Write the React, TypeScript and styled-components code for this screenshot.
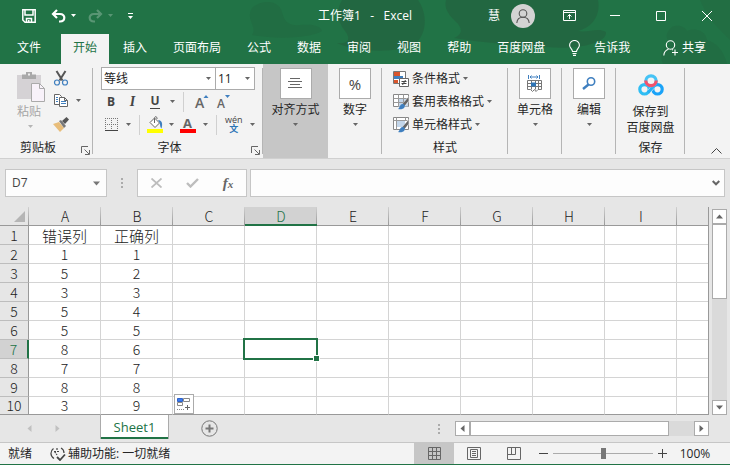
import React from "react";
import styled, { createGlobalStyle, css } from "styled-components";

const green = "#217346";
const ui = '"Open Sans", "Noto Sans CJK SC", sans-serif';
const sheetFont = '"Noto Sans CJK SC", sans-serif';

const Global = createGlobalStyle`
  *, *::before, *::after { box-sizing: border-box; }
  body { margin: 0; background: #e6e6e6; color: #262626; font: 12px/16px ${ui}; }
  button, input, select { font: inherit; color: inherit; margin: 0; padding: 0; border: 0; background: none; border-radius: 0; outline: 0; }
  svg { display: block; flex: none; }
`;

const Page = styled.div`
  display: flex;
  flex-direction: column;
  min-height: 100vh;
`;

/* ---------- header ---------- */
const Header = styled.header`
  position: relative;
  background: ${green};
  color: #fff;
  overflow: hidden;
`;
const Backdrop = styled.svg`
  position: absolute;
  top: 0;
  right: 0;
`;
const TitleBar = styled.div`
  position: relative;
  display: grid;
  grid-template-columns: 1fr auto 1fr;
  align-items: center;
  height: 34px;
  padding-bottom: 3px;
`;
const QuickAccess = styled.div`
  display: flex;
  align-items: center;
  padding-left: 22px;
`;
const QuickButton = styled.button<{ $gap?: number; $dim?: boolean }>`
  display: flex;
  margin-right: ${(p) => p.$gap ?? 0}px;
  opacity: ${(p) => (p.$dim ? 0.25 : 1)};
`;
const Title = styled.h1`
  margin: 0;
  font-size: 12px;
  font-weight: 400;
  white-space: pre;
`;
const WindowTools = styled.div`
  display: flex;
  align-items: center;
  justify-content: flex-end;
`;
const Avatar = styled.button`
  display: flex;
  justify-content: center;
  align-items: center;
  width: 24px;
  height: 24px;
  margin: 0 11px;
  border-radius: 50%;
  background: #d3d3d3;
`;
const WindowButton = styled.button`
  display: flex;
  justify-content: center;
  align-items: center;
  width: 46px;
  height: 30px;
`;
const TabBar = styled.nav`
  position: relative;
  display: flex;
  gap: 2px;
  height: 30px;
  padding: 0 11px 0 5px;
`;
const Tab = styled.button<{ $active?: boolean; $end?: number }>`
  display: flex;
  align-items: center;
  padding: 0 12px 3px;
  margin-right: ${(p) => p.$end ?? 0}px;
  background: ${(p) => (p.$active ? "#f3f3f3" : "transparent")};
  color: ${(p) => (p.$active ? green : "#fff")};
`;
const TabAction = styled(Tab)<{ $gap: number }>`
  gap: ${(p) => p.$gap}px;
  padding-right: 0;
  padding-left: 10px;
`;
const Spacer = styled.div`
  flex: 1;
`;

/* ---------- ribbon ---------- */
const Ribbon = styled.section`
  display: flex;
  height: 95px;
  background: #f3f3f3;
  border-bottom: 1px solid #d0d0d0;
`;
const Group = styled.div<{ $w: number; $line?: boolean }>`
  position: relative;
  display: flex;
  flex-direction: column;
  flex: none;
  width: ${(p) => p.$w}px;
  padding-top: 3px;
  ${(p) =>
    p.$line !== false &&
    css`
      &::after {
        content: "";
        position: absolute;
        right: 0;
        top: 4px;
        bottom: 4px;
        width: 1px;
        background: #b5b5b5;
      }
    `}
`;
const GroupLabel = styled.div<{ $launcher?: boolean }>`
  display: flex;
  justify-content: center;
  align-items: center;
  height: 18px;
  margin-top: auto;
  margin-bottom: 1px;
  padding-right: ${(p) => (p.$launcher ? 17 : 0)}px;
`;
const Launcher = styled.button`
  position: absolute;
  right: 3px;
  bottom: 3px;
`;
const ClipBody = styled.div`
  display: flex;
  padding: 4px 0 0 17px;
  gap: 8px;
`;
const PasteButton = styled.button`
  display: flex;
  flex-direction: column;
  align-items: flex-start;
  width: 28px;
  color: #a6a6a6;
`;
const PasteLabel = styled.span`
  padding-top: 1px;
`;
const PasteArrow = styled.span`
  padding: 5px 0 0 11px;
`;
const ClipTools = styled.div`
  display: flex;
  flex-direction: column;
  margin-top: -5px;
`;
const ToolButton = styled.button<{ $w?: number }>`
  display: flex;
  align-items: center;
  justify-content: ${(p) => (p.$w ? "center" : "flex-start")};
  gap: 7px;
  height: 23px;
  width: ${(p) => (p.$w ? p.$w + "px" : "auto")};
`;
const FontBody = styled.div`
  display: flex;
  flex-direction: column;
  padding: 0 8px;
`;
const ComboRow = styled.div`
  display: flex;
`;
const Combo = styled.label<{ $grow?: boolean }>`
  display: flex;
  align-items: center;
  height: 23px;
  flex: ${(p) => (p.$grow ? "1" : "0 0 40px")};
  border: 1px solid #ababab;
  margin-left: ${(p) => (p.$grow ? 0 : -1)}px;
  padding: 0 4px 0 2px;
  background: #fff;
  select {
    appearance: none;
    flex: 1;
    min-width: 0;
    color: #222;
  }
`;
const ToolRow = styled.div`
  display: flex;
  align-items: center;
  height: 23px;
`;
const VLine = styled.span`
  width: 1px;
  height: 20px;
  margin: 0 5px;
  background: #d0d0d0;
`;
const Letter = styled.span<{ $kind: "b" | "i" | "u" }>`
  color: #444;
  line-height: 14px;
  font-weight: 700;
  font-style: ${(p) => (p.$kind === "i" ? "italic" : "normal")};
  font-family: ${(p) => (p.$kind === "i" ? '"Liberation Serif", serif' : ui)};
  font-size: ${(p) => (p.$kind === "i" ? 14 : 12)}px;
  border-bottom: ${(p) => (p.$kind === "u" ? "1px solid #444" : "0")};
`;
const Pinyin = styled.span`
  display: flex;
  flex-direction: column;
  align-items: center;
  margin-left: 3px;
  font-size: 9px;
  line-height: 9px;
  color: #444;
  b {
    font-size: 9px;
    line-height: 10px;
    color: #2e75b6;
  }
`;
const BigButton = styled.button<{ $pressed?: boolean }>`
  display: flex;
  flex-direction: column;
  align-items: center;
  height: 94px;
  width: 100%;
  padding-top: 4px;
  background: ${(p) => (p.$pressed ? "#c6c6c6" : "transparent")};
`;
const PlainGroup = styled(Group)`
  padding-top: 0;
`;
const IconBox = styled.span`
  display: flex;
  align-items: center;
  justify-content: center;
  width: 32px;
  height: 31px;
  margin-bottom: 3px;
  border: 1px solid #ababab;
  background: #fff;
  font-size: 15px;
  color: #444;
`;
const ArrowSlot = styled.span`
  padding-top: 5px;
`;
const StyleList = styled.div`
  display: flex;
  flex-direction: column;
  padding-left: 11px;
`;
const StyleButton = styled.button`
  display: flex;
  align-items: center;
  gap: 3px;
  height: 23px;
  white-space: nowrap;
`;
const SaveButton = styled.button`
  display: flex;
  flex-direction: column;
  align-items: center;
  padding-top: 7px;
  svg {
    margin-bottom: 8px;
  }
`;
const Collapse = styled.button`
  align-self: flex-end;
  margin: 0 8px 4px auto;
`;

/* ---------- formula bar ---------- */
const FormulaBar = styled.div`
  display: flex;
  height: 48px;
  padding: 10px 5px;
`;
const Field = styled.div<{ $w?: number }>`
  display: flex;
  align-items: center;
  flex: ${(p) => (p.$w ? `0 0 ${p.$w}px` : "1")};
  min-width: 0;
  height: 28px;
  border: 1px solid #c6c6c6;
  background: #fdfdfd;
  input {
    flex: 1;
    min-width: 0;
    padding-left: 6px;
    color: #444;
  }
`;
const FieldButton = styled.button<{ $w: number }>`
  display: flex;
  justify-content: center;
  width: ${(p) => p.$w}px;
`;
const FxLabel = styled.span`
  font: italic 700 15px/18px "Liberation Serif", serif;
  color: #666;
  small {
    font-size: 11px;
  }
`;
const Dots = styled.span<{ $l: number; $r: number }>`
  display: flex;
  align-items: center;
  margin: 0 ${(p) => p.$r}px 0 ${(p) => p.$l}px;
`;

/* ---------- grid ---------- */
const SheetArea = styled.div`
  display: flex;
  align-items: flex-end;
  padding-right: 3px;
`;
const Grid = styled.table`
  flex: 1;
  width: 0;
  table-layout: fixed;
  border-collapse: separate;
  border-spacing: 0;
  font: 14px/17px ${sheetFont};
  color: #222;
  border-right: 1px solid #999;
`;
const HeadCol = styled.col`
  width: 29px;
`;
const DataCol = styled.col`
  width: 72px;
`;
const ColHead = styled.th<{ $on?: boolean; $last?: boolean }>`
  height: 19px;
  padding: 2px 0 0;
  vertical-align: top;
  font-weight: 300;
  line-height: 15px;
  color: ${(p) => (p.$on ? green : "#222")};
  border-bottom: ${(p) => (p.$on ? `2px solid ${green}` : "1px solid #999")};
  background: ${(p) =>
      p.$last ? "none" : "linear-gradient(#d0d0d0, #999) right / 1px 100% no-repeat"},
    ${(p) => (p.$on ? "#d2d2d2" : "#e6e6e6")};
`;
const Corner = styled(ColHead)`
  svg {
    margin: 2px 4px 0 auto;
  }
`;
const RowHead = styled.th<{ $on?: boolean; $last?: boolean }>`
  height: ${(p) => (p.$last ? 18 : 19)}px;
  padding: 0;
  font-weight: 300;
  color: ${(p) => (p.$on ? green : "#222")};
  background: ${(p) => (p.$on ? "#d2d2d2" : "#e6e6e6")};
  border-bottom: 1px solid ${(p) => (p.$last ? "#999" : "#bdbdbd")};
  border-right: ${(p) => (p.$on ? `2px solid ${green}` : "1px solid #999")};
`;
const Cell = styled.td<{ $last?: boolean; $end?: boolean; $title?: boolean }>`
  position: relative;
  padding: 0;
  font-size: ${(p) => (p.$title ? 15 : 14)}px;
  font-weight: 300;
  text-align: center;
  background: #fff;
  border-bottom: 1px solid ${(p) => (p.$last ? "#999" : "#d4d4d4")};
  border-right: ${(p) => (p.$end ? "0" : "1px solid #d4d4d4")};
`;
const Selection = styled.div`
  position: absolute;
  z-index: 1;
  inset: -2px;
  border: 2px solid ${green};
  &::after {
    content: "";
    position: absolute;
    right: -4px;
    bottom: -4px;
    width: 7px;
    height: 7px;
    border: 1px solid #fff;
    background: ${green};
  }
`;
const FillOptions = styled.button`
  position: absolute;
  z-index: 1;
  left: 1px;
  bottom: 0;
  display: flex;
  align-items: center;
  justify-content: center;
  width: 20px;
  height: 20px;
  border: 1px solid #ababab;
  background: #fff;
`;
const VScroll = styled.div`
  display: flex;
  flex-direction: column;
  align-self: stretch;
  width: 15px;
  margin: 2px 0 0 3px;
  background: #dadada;
`;
const ScrollButton = styled.button`
  display: flex;
  flex: none;
  align-items: center;
  justify-content: center;
  width: 15px;
  height: 15px;
  border: 1px solid #ababab;
  background: #fff;
`;
const VThumb = styled.div`
  height: 75px;
  margin-bottom: auto;
  border: 1px solid #ababab;
  background: #fff;
`;

/* ---------- sheet tabs and status ---------- */
const SheetBar = styled.div`
  display: flex;
  align-items: center;
  height: 27px;
  padding-right: 21px;
`;
const SheetNav = styled.div`
  display: flex;
  gap: 21px;
  width: 100px;
  padding-left: 26px;
`;
const SheetTab = styled.button`
  align-self: flex-start;
  width: 69px;
  height: 25px;
  margin-top: -1px;
  border: solid #ababab;
  border-width: 0 1px;
  box-shadow: inset 0 -2px ${green};
  background: #fff;
  color: ${green};
  font-size: 13px;
`;
const AddSheet = styled.button`
  margin-left: 32px;
`;
const HScroll = styled.div`
  display: flex;
  width: 254px;
  height: 15px;
  background: #dadada;
`;
const HThumb = styled.div`
  flex: 0 0 199px;
  margin-right: auto;
  border: 1px solid #ababab;
  background: #fff;
`;
const StatusBar = styled.footer`
  display: flex;
  align-items: center;
  height: 23px;
  margin-top: auto;
  padding: 0 19px 0 8px;
  background: #f3f3f3;
  border-top: 1px solid #c6c6c6;
  border-bottom: 1px solid ${green};
`;
const Access = styled.button`
  display: flex;
  align-items: center;
  gap: 2px;
  margin-left: 18px;
`;
const ViewButton = styled.button<{ $on?: boolean }>`
  display: flex;
  align-items: center;
  justify-content: center;
  width: 40px;
  height: 21px;
  background: ${(p) => (p.$on ? "#c6c6c6" : "transparent")};
`;
const ZoomGroup = styled.div`
  display: flex;
  align-items: center;
  gap: 5px;
  margin-left: 5px;
`;
const ZoomButton = styled.button`
  display: flex;
  width: 9px;
`;
const ZoomSlider = styled.input`
  appearance: none;
  width: 100px;
  height: 13px;
  background: linear-gradient(#ababab, #ababab) center / 100% 1px no-repeat;
  &::-webkit-slider-thumb {
    appearance: none;
    width: 5px;
    height: 11px;
    background: #777;
  }
`;
const ZoomValue = styled.button`
  width: 32px;
  margin-left: 7px;
  white-space: nowrap;
`;

/* ---------- icons ---------- */
const Arrow = ({ c = "#666" }: { c?: string }) => (
  <svg width="5" height="3" viewBox="0 0 5 3" fill={c}><path d="M0 0h5L2.500 3z" /></svg>
);
const Triangle = ({ d, c = "#666" }: { d: "u" | "d" | "l" | "r"; c?: string }) => (
  <svg width="7" height="7" viewBox="0 0 7 7" fill={c}>
    <path d={{ u: "M0 5.500L3.500 1.500L7 5.500z", d: "M0 1.500h7L3.500 5.500z", l: "M5.500 0v7L1.500 3.500z", r: "M1.500 0v7L5.500 3.500z" }[d]} />
  </svg>
);
const DotsIcon = () => (
  <svg width="2" height="10" viewBox="0 0 2 10" fill="#ababab"><path d="M0 0h2v2H0zM0 4h2v2H0zM0 8h2v2H0z" /></svg>
);
const UndoIcon = () => (
  <svg width="15" height="14" viewBox="0 0 15 14" fill="none" stroke="#fff" strokeWidth="2.200">
    <path d="M6 1L2 5l4 4M2.500 5H9c6 0 5.500 7.500 0 7.500H8" />
  </svg>
);
const Person = ({ c, size }: { c: string; size: number }) => (
  <svg width={size} height={size} viewBox="0 0 14 14" fill="none" stroke={c} strokeWidth="1.100">
    <circle cx="7" cy="4.500" r="3.800" /><path d="M.8 14c.3-4 2.800-5.700 6.200-5.700s5.900 1.700 6.200 5.700" />
  </svg>
);
const LauncherIcon = () => (
  <svg width="9" height="9" viewBox="0 0 9 9" fill="none" stroke="#666"><path d="M.5 7V.5H7M3.500 3.500L8 8M8.500 4v4.500H4" /></svg>
);
const Brush = () => (
  <g>
    <path d="M15.500 2v6l-4.500 5-2-2z" fill="#fff" /><path d="M15.500 3v4l-4 5-2-2z" fill="#666" /><path d="M9.500 10c2 0 3 1.500 2 3.200-1 1.800-4 2.600-6.500 1.800 2-1 1.500-4.500 4.500-5z" fill="#3f7fbf" />
  </g>
);
const LetterA = ({ size, up }: { size: number; up: boolean }) => (
  <svg width="16" height="22" viewBox="0 0 16 22">
    <text x="2" y="17" fontSize={size} fontWeight="600" fill="#666" fontFamily="Open Sans">A</text>
    <path d={up ? "M10.500 7L13 4l2.500 3z" : "M10 4h5l-2.500 3z"} fill="#3f7fbf" />
  </svg>
);

const tabs = ["文件", "开始", "插入", "页面布局", "公式", "数据", "审阅", "视图", "帮助", "百度网盘"];
const letters = ["A", "B", "C", "D", "E", "F", "G", "H", "I"];
const rows = [["错误列", "正确列"], ["1", "1"], ["5", "2"], ["3", "3"], ["5", "4"], ["5", "5"], ["8", "6"], ["7", "7"], ["8", "8"], ["3", "9"]];

export default function App() {
  return (
    <Page>
      <Global />
      <Header>
        <Backdrop width="730" height="64" viewBox="0 0 730 64" fill="#24633f" aria-hidden="true">
          <path d="M252 8c10-9 27-8 30 4 2 9 6 14 18 13 11-1 20 0 22 6-14 8-48 8-70 4 6-8-7-15 0-27z" opacity=".4" />
          <path d="M342 0h76c10 14 9 34-3 44-18 10-60 8-78-1 12 1 14-4 8-12-8-10-9-21-3-31z" opacity=".7" />
          <path d="M446 0h152c3 16-6 27-20 31 10 2 20-4 28 1 1 12-30 18-60 15-28-2-64-4-92-9 10-4 8-11 1-17-7-7-11-13-9-21z" opacity=".7" />
          <path d="M670 29c3-5 14-4 17 2 8-4 19 0 20 9 8 2 17 10 20 24h-64c-4-10-1-17 8-20-5-5-6-10-1-15z" opacity=".4" />
          <path d="M700 0h30v40c-10-10-22-20-30-40z" opacity=".3" />
        </Backdrop>
        <TitleBar>
          <QuickAccess>
            <QuickButton $gap={15} aria-label="保存">
              <svg width="14" height="14" viewBox="0 0 14 14" fill="none" stroke="#fff" strokeWidth="1.500"><path d="M.8.8h12.400v12.400H3L.8 11zM3 1v5h8V1M4.500 13V9.500h5V13" /><path d="M6 11h1.500v2.500H6z" fill="#fff" stroke="none" /></svg>
            </QuickButton>
            <QuickButton $gap={5} aria-label="撤消"><UndoIcon /></QuickButton>
            <QuickButton $gap={12} aria-label="撤消选项"><Arrow c="#fff" /></QuickButton>
            <QuickButton $gap={5} $dim aria-label="恢复">
              <svg width="15" height="14" viewBox="0 0 15 14" fill="none" stroke="#fff" strokeWidth="2.200"><path d="M9 1l4 4-4 4M12.500 5H6C0 5 .5 12.500 6 12.500h1" /></svg>
            </QuickButton>
            <QuickButton $gap={15} $dim aria-label="恢复选项"><Arrow c="#fff" /></QuickButton>
            <QuickButton aria-label="自定义快速访问工具栏">
              <svg width="5" height="6" viewBox="0 0 5 6" fill="#fff"><path d="M0 0h5v1H0zM0 3h5L2.500 6z" /></svg>
            </QuickButton>
          </QuickAccess>
          <Title>{"工作簿1   -   Excel"}</Title>
          <WindowTools>
            <span>慧</span>
            <Avatar aria-label="帐户"><Person c="#555" size={14} /></Avatar>
            <WindowButton aria-label="功能区显示选项">
              <svg width="13" height="11" viewBox="0 0 13 11" fill="none" stroke="#fff"><path d="M.5.5h12v10H.5zM.5 2.500h12M6.500 9V4.500M4.500 6.500l2-2 2 2" /></svg>
            </WindowButton>
            <WindowButton aria-label="最小化">
              <svg width="10" height="10" viewBox="0 0 10 10" stroke="#fff"><path d="M0 4.500h10" /></svg>
            </WindowButton>
            <WindowButton aria-label="最大化">
              <svg width="10" height="10" viewBox="0 0 10 10" fill="none" stroke="#fff"><path d="M.5.5h9v9h-9z" /></svg>
            </WindowButton>
            <WindowButton aria-label="关闭">
              <svg width="10" height="10" viewBox="0 0 10 10" stroke="#fff"><path d="M0 0l10 10M10 0L0 10" /></svg>
            </WindowButton>
          </WindowTools>
        </TitleBar>
        <TabBar>
          {tabs.map((t, i) => (
            <Tab key={t} $active={i === 1} $end={i === 0 ? 6 : 0}>{t}</Tab>
          ))}
          <TabAction $gap={14}>
            <svg width="11" height="16" viewBox="0 0 11 16" fill="none" stroke="#fff" strokeWidth="1.100"><path d="M3.500 11.500c0-2.500-2.900-3.400-2.900-6.300a4.900 4.700 0 019.800 0c0 2.900-2.900 3.800-2.900 6.300zM3.500 13.500h4M4 15.400h3" /></svg>
            告诉我
          </TabAction>
          <Spacer />
          <TabAction $gap={3} $end={13}>
            <svg width="16" height="16" viewBox="0 0 16 16" fill="none" stroke="#fff" strokeWidth="1.100"><circle cx="7.500" cy="5" r="4.200" /><path d="M.8 15.500c.2-3.500 2-5.500 4.700-6.300M9 9.500l1 .6M12 9.500v6M9 12.500h6" /></svg>
            共享
          </TabAction>
        </TabBar>
      </Header>

      <Ribbon>
        <Group $w={93}>
          <ClipBody>
            <PasteButton>
              <svg width="28" height="32" viewBox="0 0 28 32">
                <path d="M0 4h24v24H0z" fill="#d5d2d5" /><path d="M5 8V3.500h4V1h6v2.500h4V8z" fill="#a9a9a9" /><path d="M11 2.500h2v2h-2z" fill="#eee" />
                <path d="M14.500 12.500h8l5 5v13h-13z" fill="#f8f2fa" stroke="#aaa" /><path d="M22.500 12.500v5h5" fill="none" stroke="#aaa" />
              </svg>
              <PasteLabel>粘贴</PasteLabel>
              <PasteArrow><Arrow c="#b5b5b5" /></PasteArrow>
            </PasteButton>
            <ClipTools>
              <ToolButton aria-label="剪切">
                <svg width="16" height="16" viewBox="0 0 16 16" fill="none"><path d="M3.500 1l6 9.500M12.500 1l-6 9.500" stroke="#555" strokeWidth="2" /><circle cx="4" cy="12.500" r="2.500" stroke="#3f7fbf" strokeWidth="1.200" /><circle cx="12" cy="12.500" r="2.500" stroke="#3f7fbf" strokeWidth="1.200" /></svg>
              </ToolButton>
              <ToolButton aria-label="复制">
                <svg width="16" height="16" viewBox="0 0 16 16" fill="#fff" stroke="#666"><path d="M1.500 1.500h5l2 2v8h-7z" /><path d="M6.500 4.500h5l3 3v6h-8zM11.500 4.500v3h3" /><path d="M3 4.500h2M3 6.500h2M3 8.500h2M8 8.500h5M8 10.500h5" stroke="#3f7fbf" /></svg>
                <Arrow />
              </ToolButton>
              <ToolButton aria-label="格式刷">
                <svg width="16" height="16" viewBox="0 0 16 16"><path d="M0 8l6-2 5 6-4 4z" fill="#e8bd7a" /><path d="M6 5l2-1 5 6-2 2z" fill="#777" /><path d="M9 5l4.500-4L16 3.500 12 8z" fill="#555" /></svg>
              </ToolButton>
            </ClipTools>
          </ClipBody>
          <GroupLabel $launcher>剪贴板</GroupLabel>
          <Launcher aria-label="剪贴板选项"><LauncherIcon /></Launcher>
        </Group>

        <Group $w={170}>
          <FontBody>
            <ComboRow>
              <Combo $grow><select aria-label="字体"><option>等线</option></select><Arrow /></Combo>
              <Combo><select aria-label="字号"><option>11</option></select><Arrow /></Combo>
            </ComboRow>
            <ToolRow>
              <ToolButton $w={20} aria-label="加粗"><Letter $kind="b">B</Letter></ToolButton>
              <ToolButton $w={23} aria-label="倾斜"><Letter $kind="i">I</Letter></ToolButton>
              <ToolButton $w={22} aria-label="下划线"><Letter $kind="u">U</Letter></ToolButton>
              <ToolButton $w={12} aria-label="下划线选项"><Arrow /></ToolButton>
              <VLine />
              <ToolButton $w={24} aria-label="增大字号"><LetterA size={14} up /></ToolButton>
              <ToolButton $w={20} aria-label="减小字号"><LetterA size={12} up={false} /></ToolButton>
            </ToolRow>
            <ToolRow>
              <ToolButton $w={21} aria-label="边框">
                <svg width="13" height="14" viewBox="0 0 13 14" stroke="#777" fill="none"><path d="M0 .5h13M0 6.500h13M.5 0v12M6.500 0v12M12.500 0v12" strokeDasharray="1 1" /><path d="M0 12.500h13" stroke="#444" /></svg>
              </ToolButton>
              <ToolButton $w={12} aria-label="边框选项"><Arrow /></ToolButton>
              <VLine />
              <ToolButton $w={20} aria-label="填充颜色">
                <svg width="16" height="17" viewBox="0 0 16 17"><path d="M3 6.500L7.500 2l5 5L8 11.500z" fill="#fff" stroke="#666" /><path d="M7.500 7V2.500c0-3 3-2 2.500.5" fill="none" stroke="#666" /><path d="M11 4c4 0 5 4 3.500 8.500C12.500 11 14 8 11 4z" fill="#3f7fbf" /><path d="M0 13h16v4H0z" fill="#ff0" /></svg>
              </ToolButton>
              <ToolButton $w={12} aria-label="填充选项"><Arrow /></ToolButton>
              <ToolButton $w={22} aria-label="字体颜色">
                <svg width="16" height="23" viewBox="0 0 16 23"><text x="3" y="15" fontSize="13" fontWeight="700" fill="#666" fontFamily="Open Sans">A</text><path d="M0 16h16v4H0z" fill="red" /></svg>
              </ToolButton>
              <ToolButton $w={12} aria-label="颜色选项"><Arrow /></ToolButton>
              <VLine />
              <ToolButton aria-label="拼音"><Pinyin>wén<b>文</b></Pinyin><Arrow /></ToolButton>
            </ToolRow>
          </FontBody>
          <GroupLabel $launcher>字体</GroupLabel>
          <Launcher aria-label="字体设置"><LauncherIcon /></Launcher>
        </Group>

        <PlainGroup $w={65} $line={false}>
          <BigButton $pressed>
            <IconBox><svg width="15" height="11" viewBox="0 0 15 11" stroke="#666"><path d="M2 .5h10M0 3.500h14M2 6.500h10M0 9.500h14" /></svg></IconBox>
            对齐方式
            <ArrowSlot><Arrow /></ArrowSlot>
          </BigButton>
        </PlainGroup>
        <PlainGroup $w={54}>
          <BigButton><IconBox>%</IconBox>数字<ArrowSlot><Arrow /></ArrowSlot></BigButton>
        </PlainGroup>
        <Group $w={126}>
          <StyleList>
            <StyleButton>
              <svg width="16" height="16" viewBox="0 0 16 16"><path d="M.5.5h12v12H.5z" fill="#fff" stroke="#777" /><path d="M1 1h6v4H1z" fill="#d9552c" /><path d="M1 5h9v3H1z" fill="#3f7fbf" /><path d="M1 9h4v3H1z" fill="#d9552c" /><path d="M6.500 7.500h9v8h-9z" fill="#fff" stroke="#666" /><path d="M8.500 10.500h5M8.500 12.500h5M12.500 9l-3 5" stroke="#444" /></svg>
              条件格式<Arrow />
            </StyleButton>
            <StyleButton>
              <svg width="16" height="16" viewBox="0 0 16 16"><path d="M.5.5h15v12H.5z" fill="#fff" stroke="#888" /><path d="M5 4.500h10v8H5z" fill="#c3d6ea" /><path d="M.5 4.500h15M.5 8.500h15M5.500.5v12M10.500.5v12" stroke="#999" fill="none" /><Brush /></svg>
              套用表格格式<Arrow />
            </StyleButton>
            <StyleButton>
              <svg width="16" height="16" viewBox="0 0 16 16"><path d="M.5.5h15v12H.5z" fill="#fff" stroke="#888" /><path d="M4 4h8v6H4z" fill="#c3d6ea" /><path d="M.5 3.500h15M3.500.5v12M12.500.5v3" stroke="#999" fill="none" /><Brush /></svg>
              单元格样式<Arrow />
            </StyleButton>
          </StyleList>
          <GroupLabel>样式</GroupLabel>
        </Group>
        <PlainGroup $w={54}>
          <BigButton>
            <IconBox>
              <svg width="16" height="17" viewBox="0 0 16 17" fill="none" stroke="#777"><path d="M1.500 0v4M12.500 0v4M3 2h8M4.500.5L3 2l1.500 1.500M9.500.5L11 2 9.500 3.500" stroke="#3f7fbf" /><path d="M.5 5.500h14v9H11l-2 2-1.500-2-2 2-2-2h-3zM.5 8.500h14M.5 11.500h14M4.500 5.500v9M8.500 5.500v9M11.500 5.500v9" /><path d="M4 7.500h5v4H4z" fill="#2e75b6" stroke="none" /></svg>
            </IconBox>
            单元格<ArrowSlot><Arrow /></ArrowSlot>
          </BigButton>
        </PlainGroup>
        <PlainGroup $w={54}>
          <BigButton>
            <IconBox><svg width="14" height="13" viewBox="0 0 14 13" fill="none" stroke="#3f7fbf"><circle cx="9" cy="4.500" r="3.700" strokeWidth="1.600" /><path d="M6.500 7.500L1 12" strokeWidth="2.400" /></svg></IconBox>
            编辑<ArrowSlot><Arrow /></ArrowSlot>
          </BigButton>
        </PlainGroup>
        <Group $w={69}>
          <SaveButton>
            <svg width="26" height="22" viewBox="0 0 26 22" fill="none" strokeWidth="3.200">
              <circle cx="6.500" cy="15.300" r="4.700" stroke="#2fbdf3" />
              <circle cx="19.500" cy="15.300" r="4.700" stroke="#1aa3f8" />
              <path d="M11 17.500l4.500-5" stroke="#f3f3f3" strokeWidth="4" />
              <path d="M10 18.500l6-6.500" stroke="#25b0f6" />
              <circle cx="13" cy="7" r="5.200" stroke="#45c3f5" />
              <path d="M7.800 6.500a5.200 5.200 0 1010.400 0" stroke="#f4526b" />
            </svg>
            <span>保存到</span><span>百度网盘</span>
          </SaveButton>
          <GroupLabel>保存</GroupLabel>
        </Group>
        <Collapse aria-label="折叠功能区"><svg width="11" height="6" viewBox="0 0 11 6" fill="none" stroke="#444"><path d="M.5 5.500l5-5 5 5" /></svg></Collapse>
      </Ribbon>

      <FormulaBar>
        <Field $w={102}>
          <input aria-label="名称框" defaultValue="D7" />
          <FieldButton $w={20} aria-label="名称列表"><Triangle d="d" c="#777" /></FieldButton>
        </Field>
        <Dots $l={14} $r={14}><DotsIcon /></Dots>
        <Field $w={110}>
          <FieldButton $w={36} aria-label="取消"><svg width="11" height="10" viewBox="0 0 11 10" stroke="#bdbdbd" strokeWidth="1.800"><path d="M.5.5l10 9M10.500.5l-10 9" /></svg></FieldButton>
          <FieldButton $w={36} aria-label="输入"><svg width="13" height="10" viewBox="0 0 13 10" fill="none" stroke="#bdbdbd" strokeWidth="2.400"><path d="M1 5l3.500 3.500L12 1" /></svg></FieldButton>
          <FieldButton $w={36} aria-label="插入函数"><FxLabel>f<small>x</small></FxLabel></FieldButton>
        </Field>
        <Dots $l={3} $r={0} />
        <Field>
          <input aria-label="编辑栏" />
          <FieldButton $w={16} aria-label="展开编辑栏"><svg width="8" height="6" viewBox="0 0 8 6" fill="none" stroke="#666" strokeWidth="2"><path d="M.7 1L4 4.300 7.300 1" /></svg></FieldButton>
        </Field>
      </FormulaBar>

      <SheetArea>
        <Grid>
          <colgroup><HeadCol />{letters.map((l) => <DataCol key={l} />)}<col /></colgroup>
          <thead>
            <tr>
              <Corner aria-label="全选"><svg width="11" height="11" viewBox="0 0 11 11" fill="#b5b5b5"><path d="M11 0v11H0z" /></svg></Corner>
              {letters.map((l) => <ColHead key={l} $on={l === "D"}>{l}</ColHead>)}
              <ColHead $last />
            </tr>
          </thead>
          <tbody>
            {rows.map((r, i) => {
              const last = i === rows.length - 1;
              return (
                <tr key={i}>
                  <RowHead $on={i === 6} $last={last}>{i + 1}</RowHead>
                  {letters.map((l, j) => (
                    <Cell key={l} $last={last} $title={i === 0}>
                      {r[j]}
                      {i === 6 && l === "D" && <Selection />}
                      {last && l === "C" && (
                        <FillOptions aria-label="自动填充选项">
                          <svg width="14" height="14" viewBox="0 0 14 14" fill="none" stroke="#888"><path d="M6.500 1.500h6v3h-6zM.5 5.500h5v3h-5z" /><path d="M.5 1.500h5v3h-5z" fill="#3c7bf0" stroke="#2e62c8" /><path d="M0 12.500h7" strokeDasharray="1 1" /><path d="M8 10.500h5M10.500 8v5" stroke="#666" /></svg>
                        </FillOptions>
                      )}
                    </Cell>
                  ))}
                  <Cell $last={last} $end />
                </tr>
              );
            })}
          </tbody>
        </Grid>
        <VScroll>
          <ScrollButton aria-label="向上滚动"><Triangle d="u" /></ScrollButton>
          <VThumb />
          <ScrollButton aria-label="向下滚动"><Triangle d="d" /></ScrollButton>
        </VScroll>
      </SheetArea>

      <SheetBar>
        <SheetNav><Triangle d="l" c="#c0c0c0" /><Triangle d="r" c="#c0c0c0" /></SheetNav>
        <SheetTab>Sheet1</SheetTab>
        <AddSheet aria-label="新工作表">
          <svg width="17" height="17" viewBox="0 0 17 17" fill="none" stroke="#777"><circle cx="8.500" cy="8.500" r="7.700" /><path d="M4.500 8.500h8M8.500 4.500v8" strokeWidth="2" /></svg>
        </AddSheet>
        <Spacer />
        <Dots $l={0} $r={15}><DotsIcon /></Dots>
        <HScroll>
          <ScrollButton aria-label="向左滚动"><Triangle d="l" /></ScrollButton>
          <HThumb />
          <ScrollButton aria-label="向右滚动"><Triangle d="r" /></ScrollButton>
        </HScroll>
      </SheetBar>

      <StatusBar>
        <span>就绪</span>
        <Access>
          <svg width="16" height="14" viewBox="0 0 16 14" fill="none" stroke="#444" strokeWidth="1.200"><path d="M3.500 1.500C0 4 0 9 4 11.500M11 1c2 1 3 3 3 5" /><path d="M4 4.500h6M7 1v3M4.500 4.500L7 8" strokeDasharray="2 1" /><path d="M7 10l3 3 5-5.500" strokeWidth="1.800" /></svg>
          辅助功能: 一切就绪
        </Access>
        <Spacer />
        <ViewButton $on aria-label="普通"><svg width="13" height="13" viewBox="0 0 13 13" fill="none" stroke="#666"><path d="M.5.5h12v12H.5zM.5 4.500h12M.5 8.500h12M4.500.5v12M8.500.5v12" /></svg></ViewButton>
        <ViewButton aria-label="页面布局"><svg width="14" height="13" viewBox="0 0 14 13" fill="none" stroke="#666"><path d="M.5.5h13v12H.5zM3.500 2.500h7v8h-7zM5 4.500h4M5 6.500h4M5 8.500h4" /></svg></ViewButton>
        <ViewButton aria-label="分页预览"><svg width="14" height="13" viewBox="0 0 14 13" fill="none" stroke="#666"><path d="M.5.5h13v12H.5zM.5 7.500h8v-7M4.500.5v7" /></svg></ViewButton>
        <ZoomGroup>
          <ZoomButton aria-label="缩小"><svg width="9" height="9" viewBox="0 0 9 9" stroke="#444"><path d="M0 4.500h9" /></svg></ZoomButton>
          <ZoomSlider type="range" aria-label="显示比例" min="0" max="200" defaultValue="100" />
          <ZoomButton aria-label="放大"><svg width="9" height="9" viewBox="0 0 9 9" stroke="#444"><path d="M0 4.500h9M4.500 0v9" /></svg></ZoomButton>
          <ZoomValue>100%</ZoomValue>
        </ZoomGroup>
      </StatusBar>
    </Page>
  );
}
